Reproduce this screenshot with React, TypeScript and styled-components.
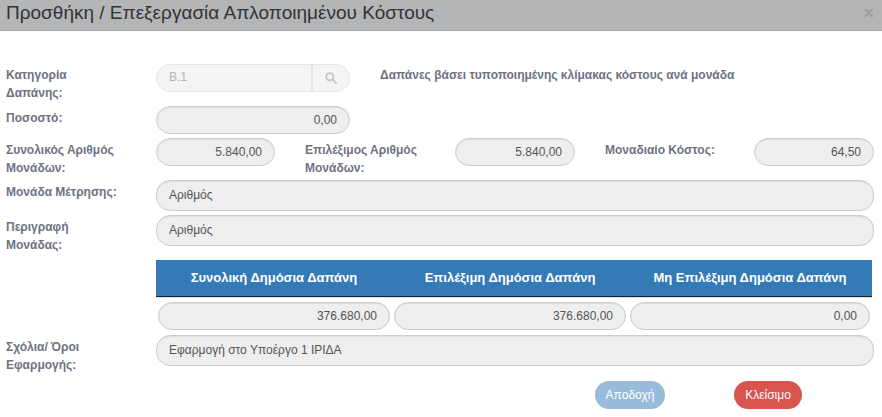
import React from "react";
import styled, { createGlobalStyle } from "styled-components";

const GlobalStyle = createGlobalStyle`
  html, body {
    margin: 0;
    padding: 0;
    background: #fff;
    font-family: "Liberation Sans", Arial, sans-serif;
  }
`;

const Modal = styled.div`
  width: 882px;
  height: 417px;
  overflow: hidden;
  background: #fff;
`;

const Header = styled.div`
  height: 31px;
  box-sizing: border-box;
  display: flex;
  align-items: center;
  justify-content: space-between;
  padding: 0 8px 4px 6px;
  background: #b4b5b7;
  border-bottom: 1px solid #a9aaac;
`;

const Title = styled.h4`
  margin: 0;
  font-size: 19px;
  font-weight: 400;
  line-height: 20px;
  color: #333;
`;

const CloseMark = styled.span`
  font-size: 18px;
  font-weight: 700;
  line-height: 20px;
  margin-top: 0;
  color: #9b9c9e;
`;

const Body = styled.div`
  display: flex;
  flex-direction: column;
  padding: 33px 8px 0 6px;
`;

const Row = styled.div<{ $gap: number; $height: number }>`
  display: flex;
  height: ${(p) => p.$height}px;
  margin-bottom: ${(p) => p.$gap}px;
`;

const Label = styled.label<{ $width: number; $offset?: number; $left?: number }>`
  flex: none;
  box-sizing: border-box;
  width: ${(p) => p.$width}px;
  margin-left: ${(p) => p.$left ?? 0}px;
  padding-top: ${(p) => p.$offset ?? 4}px;
  padding-right: 34px;
  font-size: 12px;
  font-weight: 700;
  line-height: 18px;
  color: #6f7284;
`;

const Field = styled.div<{ $width?: number; $right?: boolean }>`
  box-sizing: border-box;
  ${(p) => (p.$width ? `flex: none; width: ${p.$width}px;` : "flex: 1;")}
  height: 100%;
  display: flex;
  align-items: center;
  justify-content: ${(p) => (p.$right ? "flex-end" : "flex-start")};
  padding: 0 12px ${(p) => (p.$right ? 0 : 2)}px;
  background: #eeeeee;
  border: 1px solid #cccccc;
  border-radius: 14px;
  box-shadow: inset 0 1px 1px rgba(0, 0, 0, 0.075);
  font-size: 12px;
  color: #555;
`;

const SearchGroup = styled.div`
  flex: none;
  width: 194px;
  box-sizing: border-box;
  display: flex;
  height: 100%;
  background: #f4f4f4;
  border: 1px solid #e4e4e4;
  border-radius: 14px;
  font-size: 12px;
  color: #b3b3b3;
`;

const SearchValue = styled.div`
  flex: 1;
  display: flex;
  align-items: center;
  padding: 0 0 2px 12px;
  border-right: 2px solid #e4e4e4;
`;

const SearchButton = styled.div`
  flex: none;
  width: 36px;
  display: flex;
  align-items: center;
  justify-content: center;
`;

const Description = styled.div`
  margin-left: 30px;
  padding-top: 4px;
  font-size: 12px;
  font-weight: 700;
  line-height: 14px;
  color: #6f7284;
`;

const TableBlock = styled.div`
  margin: 0 2px 5px 150px;
`;

const TableHead = styled.div`
  display: grid;
  grid-template-columns: 236px 236px 244px;
  height: 36px;
  background: #337ab7;
  border-bottom: 1px solid #10243a;
`;

const HeadCell = styled.div`
  display: flex;
  align-items: center;
  justify-content: center;
  padding-bottom: 2px;
  font-size: 13px;
  font-weight: 700;
  color: #fff;
`;

const TableValues = styled.div`
  display: flex;
  gap: 4px;
  height: 28px;
  padding: 4px 2px 0;
  border-top: 1px solid #ddd;
`;

const Footer = styled.div`
  display: flex;
  margin-top: 15px;
  padding-left: 589px;
`;

const ActionButton = styled.button<{ $color: string; $width: number; $gap?: number }>`
  width: ${(p) => p.$width}px;
  height: 28px;
  margin-right: ${(p) => p.$gap ?? 0}px;
  padding: 0;
  border: 0;
  border-radius: 14px;
  background: ${(p) => p.$color};
  color: #fff;
  font-family: inherit;
  font-size: 12px;
`;

const SearchIcon = () => (
  <svg width="12" height="12" viewBox="0 0 13 13" fill="none" stroke="#c4c4c4" strokeWidth="2">
    <circle cx="5.2" cy="5.2" r="3.9" />
    <path d="M8.2 8.2 L12 12" strokeLinecap="round" />
  </svg>
);

export default function App() {
  return (
    <Modal>
      <GlobalStyle />
      <Header>
        <Title>Προσθήκη / Επεξεργασία Απλοποιημένου Κόστους</Title>
        <CloseMark>×</CloseMark>
      </Header>
      <Body>
        <Row $height={28} $gap={14}>
          <Label $width={150} $offset={2}>Κατηγορία Δαπάνης:</Label>
          <SearchGroup>
            <SearchValue>Β.1</SearchValue>
            <SearchButton>
              <SearchIcon />
            </SearchButton>
          </SearchGroup>
          <Description>Δαπάνες βάσει τυποποιημένης κλίμακας κόστους ανά μονάδα</Description>
        </Row>
        <Row $height={28} $gap={4}>
          <Label $width={150} $offset={3}>Ποσοστό:</Label>
          <Field $width={194} $right>0,00</Field>
        </Row>
        <Row $height={28} $gap={14}>
          <Label $width={150} $offset={3}>Συνολικός Αριθμός Μονάδων:</Label>
          <Field $width={119} $right>5.840,00</Field>
          <Label $width={150} $offset={3} $left={30}>Επιλέξιμος Αριθμός Μονάδων:</Label>
          <Field $width={120} $right>5.840,00</Field>
          <Label $width={149} $offset={3} $left={30}>Μοναδιαίο Κόστος:</Label>
          <Field $width={120} $right>64,50</Field>
        </Row>
        <Row $height={31} $gap={4}>
          <Label $width={150} $offset={3}>Μονάδα Μέτρησης:</Label>
          <Field>Αριθμός</Field>
        </Row>
        <Row $height={31} $gap={14}>
          <Label $width={150} $offset={3}>Περιγραφή Μονάδας:</Label>
          <Field>Αριθμός</Field>
        </Row>
        <TableBlock>
          <TableHead>
            <HeadCell>Συνολική Δημόσια Δαπάνη</HeadCell>
            <HeadCell>Επιλέξιμη Δημόσια Δαπάνη</HeadCell>
            <HeadCell>Μη Επιλέξιμη Δημόσια Δαπάνη</HeadCell>
          </TableHead>
          <TableValues>
            <Field $width={232} $right>376.680,00</Field>
            <Field $width={232} $right>376.680,00</Field>
            <Field $width={240} $right>0,00</Field>
          </TableValues>
        </TableBlock>
        <Row $height={31} $gap={0}>
          <Label $width={150} $offset={3}>Σχόλια/ Όροι Εφαρμογής:</Label>
          <Field>Εφαρμογή στο Υποέργο 1 ΙΡΙΔΑ</Field>
        </Row>
        <Footer>
          <ActionButton $color="#98bbdb" $width={70} $gap={69}>Αποδοχή</ActionButton>
          <ActionButton $color="#d9534f" $width={68}>Κλείσιμο</ActionButton>
        </Footer>
      </Body>
    </Modal>
  );
}
